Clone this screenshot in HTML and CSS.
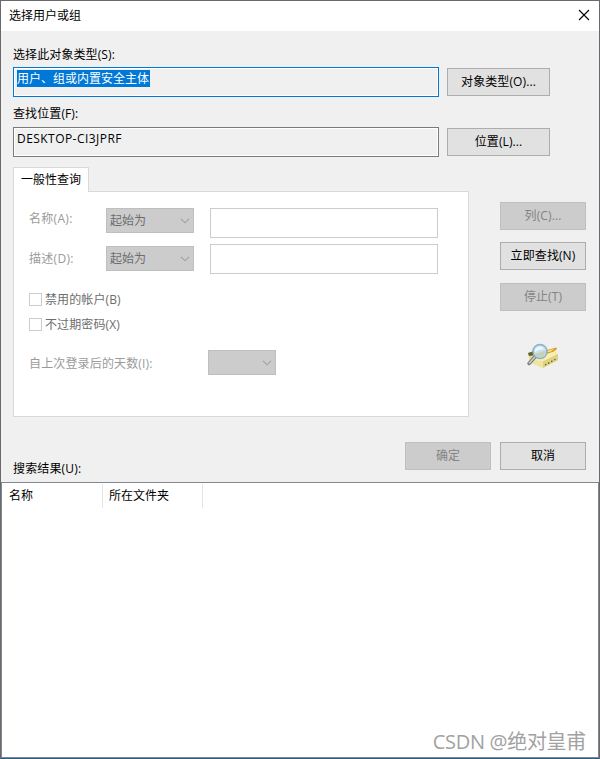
FILE: index.html
```html
<!DOCTYPE html>
<html lang="zh-CN">
<head>
<meta charset="utf-8">
<title>选择用户或组</title>
<link rel="stylesheet" href="styles.css">
</head>
<body>
<div class="window">
  <header class="titlebar">
    <span class="title">选择用户或组</span>
    <svg class="close" width="12" height="12" viewBox="0 0 12 12"><path d="M1 1L11 11M11 1L1 11"/></svg>
  </header>
  <main class="content">
    <div class="label">选择此对象类型(S):</div>
    <div class="picker">
      <div class="readonly focused"><span class="selection">用户、组或内置安全主体</span></div>
      <button class="button wide">对象类型(O)...</button>
    </div>
    <div class="label second">查找位置(F):</div>
    <div class="picker">
      <div class="readonly"><span class="latin">DESKTOP-CI3JPRF</span></div>
      <button class="button wide">位置(L)...</button>
    </div>
    <div class="query">
      <section class="tabs">
        <div class="tab">一般性查询</div>
        <div class="panel">
          <div class="row name-row">
            <span class="caption">名称(A):</span>
            <div class="select">起始为<svg width="10" height="6" viewBox="0 0 10 6"><path d="M1 .8L5 4.8L9 .8"/></svg></div>
            <div class="field"></div>
          </div>
          <div class="row">
            <span class="caption">描述(D):</span>
            <div class="select desc">起始为<svg width="10" height="6" viewBox="0 0 10 6"><path d="M1 .8L5 4.8L9 .8"/></svg></div>
            <div class="field"></div>
          </div>
          <div class="check first"><i class="box"></i>禁用的帐户(B)</div>
          <div class="check"><i class="box"></i>不过期密码(X)</div>
          <div class="days">
            <span class="days-label">自上次登录后的天数(I):</span>
            <div class="select short"><svg width="10" height="6" viewBox="0 0 10 6"><path d="M1 .8L5 4.8L9 .8"/></svg></div>
          </div>
        </div>
      </section>
      <aside class="side">
        <button class="button" disabled>列(C)...</button>
        <button class="button find">立即查找(N)</button>
        <button class="button stop" disabled>停止(T)</button>
        <svg class="search" width="34" height="26" viewBox="0 0 34 26">
          <path d="M2 10L8 8L28 8L32 11V17L17 25L4 19Z" fill="#e3d98f"/>
          <path d="M18 8L30 4.500L31 6L27 9L19 11Z" fill="#d99d15"/>
          <path d="M18 9L29 5.500L24 9Z" fill="#fbe27a"/>
          <path d="M2 10L8 8L10 12L3 13Z" fill="#5f6031"/>
          <path d="M5 17L28 8.500L32 11L17 18.500Z" fill="#f6efb2"/>
          <path d="M17 18.500L32 11V17L17 25Z" fill="#ded281"/>
          <path d="M5 17L17 18.500V25L4 20Z" fill="#eee5a0"/>
          <path d="M19 22L30 16" stroke="#686029" stroke-width="1.300" stroke-dasharray="1.500 2" fill="none"/>
          <path d="M9 14L3 20.500" stroke="#777" stroke-width="3.400" stroke-linecap="round"/>
          <path d="M9 14L3.300 20" stroke="#ccc" stroke-width="1.700" stroke-linecap="round"/>
          <circle cx="14" cy="8.500" r="7" fill="#c8e2f0" fill-opacity=".95" stroke="#8eafc8" stroke-width="1.500"/>
          <path d="M8 11Q13 10 20 7.500Q19 14 14 14.500Q10 14 8 11" fill="#c3d3b5"/>
          <path d="M9 7Q11 3 16 4L18 6Q13 6 9 9Z" fill="#edfaff"/>
        </svg>
      </aside>
    </div>
    <div class="actions">
      <button class="button" disabled>确定</button>
      <button class="button">取消</button>
    </div>
    <div class="results-label">搜索结果(U):</div>
  </main>
  <section class="results">
    <div class="columns"><div class="column">名称</div><div class="column">所在文件夹</div></div>
    <div class="watermark">CSDN @绝对皇甫</div>
  </section>
</div>
</body>
</html>
```

FILE: styles.css
```css
* { box-sizing: border-box; }
body {
  margin: 0;
  font: 12px/16px "Open Sans", "Noto Sans CJK SC", sans-serif;
  color: #000;
}
.window {
  width: 600px;
  height: 759px;
  border: 1px solid #69696b;
  border-bottom-color: #23617d;
  background: #f0f0f0;
  display: flex;
  flex-direction: column;
}
.titlebar {
  height: 30px;
  background: #fff;
  display: flex;
  justify-content: space-between;
  padding: 7px 9px 0 8px;
}
.close { margin-top: 1px; fill: none; stroke: #000; stroke-width: 1.1; }
.content { height: 451px; padding: 16px 13px 0 12px; }
.label { height: 20px; white-space: nowrap; letter-spacing: .1px; }
.label.second { margin-top: 9px; height: 21px; }
.picker { display: flex; gap: 8px; align-items: center; height: 30px; }
.readonly {
  width: 426px;
  height: 30px;
  border: 1px solid #7a7a7a;
  box-shadow: inset 0 0 0 1px #fff;
  padding: 2px 3px;
}
.readonly.focused { border-color: #0078d7; }
.selection { display: block; width: 133px; height: 17px; line-height: 18px; background: #0078d7; color: #fff; white-space: nowrap; }
.latin { display: block; padding-top: 1px; letter-spacing: .45px; }
.button {
  width: 86px;
  height: 28px;
  flex: none;
  border: 1px solid #adadad;
  background: #e1e1e1;
  padding: 0;
  font: inherit;
  letter-spacing: .1px;
  color: #000;
  white-space: nowrap;
}
.button.wide { width: 103px; }
.button:disabled { background: #ccc; border-color: #bfbfbf; color: #838383; }
.query { display: flex; margin-top: 10px; height: 250px; justify-content: space-between; }
.tabs { width: 456px; }
.tab {
  position: relative;
  width: 76px;
  height: 25px;
  border: 1px solid #d9d9d9;
  border-bottom: 0;
  background: #fff;
  padding: 4px 7px;
  white-space: nowrap;
}
.panel { height: 226px; margin-top: -1px; border: 1px solid #d9d9d9; background: #fff; padding: 16px 0 0 15px; color: #6d6d6d; }
.row { display: flex; height: 30px; margin-bottom: 6px; }
.caption { width: 77px; padding-top: 3px; color: #9a9a9a; letter-spacing: .3px; }
.row + .row .caption { padding-top: 7px; }
.select {
  width: 88px;
  height: 25px;
  border: 1px solid #bfbfbf;
  background: #ccc;
  padding: 0 3px;
  display: flex;
  justify-content: space-between;
  align-items: center;
}
.select.desc { margin-top: 2px; }
.select svg { fill: none; stroke: #a0a0a0; stroke-width: 1.1; }
.select.short { width: 68px; justify-content: flex-end; }
.field { width: 228px; height: 30px; margin-left: 16px; border: 1px solid #ccc; }
.check { display: flex; align-items: center; gap: 3px; height: 13px; margin-top: 12px; letter-spacing: .1px; }
.check.first { margin-top: 19px; }
.box { width: 13px; height: 13px; border: 1px solid #ccc; }
.days { display: flex; margin-top: 19px; }
.days-label { width: 179px; padding-top: 6px; color: #9a9a9a; letter-spacing: .15px; }
.side { width: 86px; padding-top: 35px; display: flex; flex-direction: column; }
.find { margin-top: 12px; }
.stop { margin-top: 13px; }
.search { margin: 32px 0 0 26px; }
.actions { display: flex; justify-content: flex-end; gap: 9px; margin-top: 25px; }
.results-label { margin-top: -9px; letter-spacing: .15px; }
.results {
  position: relative;
  flex: 1;
  border: 1px solid #828790;
  background: #fff;
}
.columns { display: flex; padding-top: 1px; }
.column { width: 100px; height: 24px; border-right: 1px solid #e5e5e5; padding: 4px 0 0 6px; white-space: nowrap; }
.column:first-child { width: 101px; padding-left: 7px; }
.watermark {
  position: absolute;
  right: 12px;
  bottom: 1px;
  font-size: 20px;
  line-height: 28px;
  letter-spacing: -.3px;
  color: #a2a2a2;
  white-space: nowrap;
}
```
